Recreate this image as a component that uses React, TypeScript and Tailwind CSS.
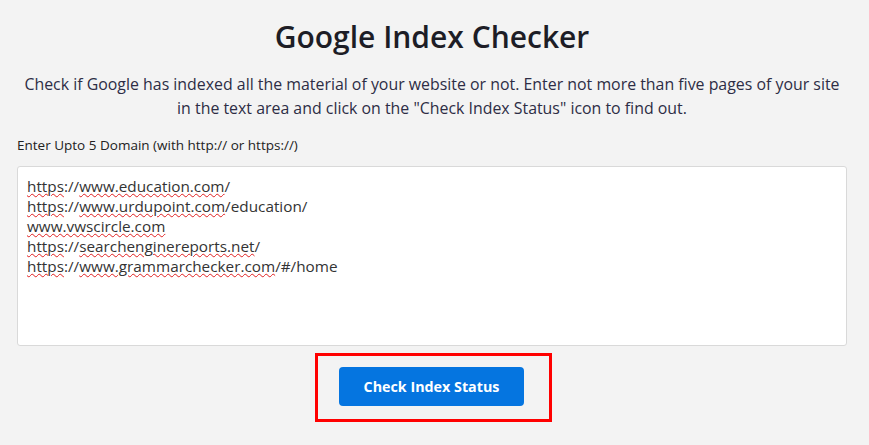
const lines: { text: string; wavy: boolean }[][] = [
  [
    { text: 'https', wavy: true },
    { text: '://', wavy: false },
    { text: 'www.education.com', wavy: true },
    { text: '/', wavy: false },
  ],
  [
    { text: 'https', wavy: true },
    { text: '://', wavy: false },
    { text: 'www.urdupoint.com', wavy: true },
    { text: '/education/', wavy: false },
  ],
  [{ text: 'www.vwscircle.com', wavy: true }],
  [
    { text: 'https', wavy: true },
    { text: '://', wavy: false },
    { text: 'searchenginereports.net', wavy: true },
    { text: '/', wavy: false },
  ],
  [
    { text: 'https', wavy: true },
    { text: '://', wavy: false },
    { text: 'www.grammarchecker.com', wavy: true },
    { text: '/#/home', wavy: false },
  ],
];

export default function App() {
  return (
    <div className="min-h-[445px] bg-[#f3f3f3] pl-[17px] pr-[22px] pt-[17px] font-['Open_Sans',sans-serif] text-[#2b2b3a]">
      <h1 className="text-center text-[30px] font-semibold leading-[40px] text-[#1d1d26]">
        Google Index Checker
      </h1>

      <p className="mt-[15px] text-center text-[15.9px] leading-[24px] text-[#2d2d45]">
        Check if Google has indexed all the material of your website or not. Enter not more than five pages of your site
        <br />
        in the text area and click on the "Check Index Status" icon to find out.
      </p>

      <label className="mt-[16px] block text-[13.5px] leading-[18px] text-[#222]">
        Enter Upto 5 Domain (with http:// or https://)
      </label>

      <div className="mt-[12px] h-[180px] rounded-[3px] border border-[#d9d9d9] bg-white px-[9px] pt-[9px] text-[15.3px] leading-[20px] text-[#333]">
        {lines.map((line, i) => (
          <div key={i}>
            {line.map((seg, j) => (
              <span
                key={j}
                className={seg.wavy ? 'underline decoration-wavy decoration-[#e02020] decoration-1 underline-offset-1' : ''}
              >
                {seg.text}
              </span>
            ))}
          </div>
        ))}
      </div>

      <div className="flex justify-center pl-[3px] pt-[7px]">
        <div className="border-[3px] border-[#ff0000] pb-[13px] pl-[21px] pr-[25px] pt-[11px]">
          <button className="h-[39px] w-[185px] rounded-[4px] bg-[#0575e0] text-[14.3px] font-bold text-white">
            Check Index Status
          </button>
        </div>
      </div>
    </div>
  );
}
